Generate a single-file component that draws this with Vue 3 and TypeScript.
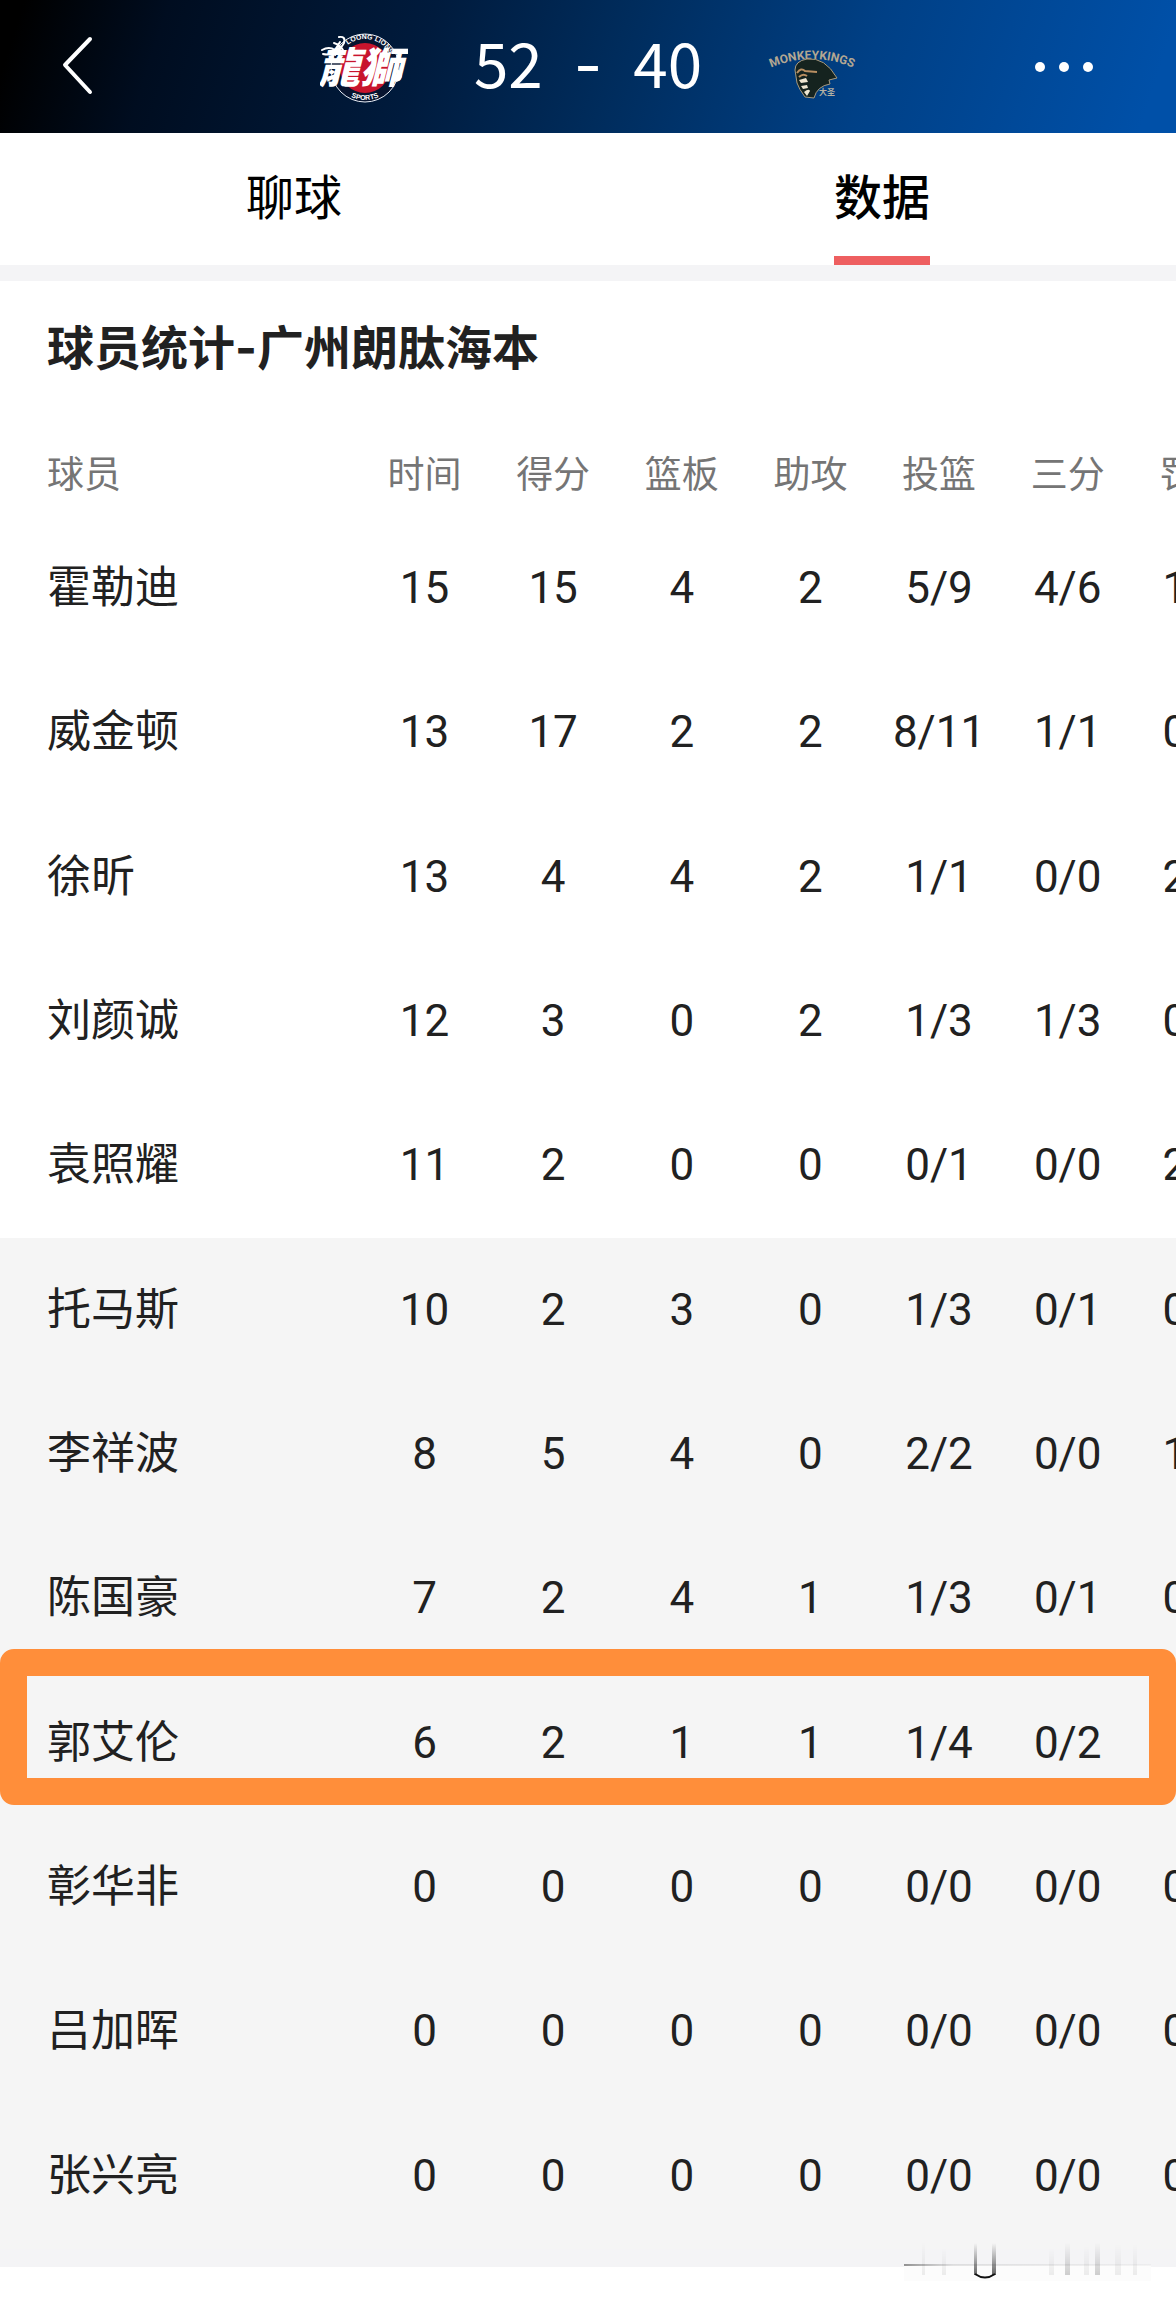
<script setup lang="ts">
interface Player {
  name: string
  stats: string[]
  bench?: boolean
  marked?: boolean
}

const columns: string[] = ['时间', '得分', '篮板', '助攻', '投篮', '三分', '罚球']

const players: Player[] = [
  { name: '霍勒迪', stats: ['15', '15', '4', '2', '5/9', '4/6', '1/2'] },
  { name: '威金顿', stats: ['13', '17', '2', '2', '8/11', '1/1', '0/0'] },
  { name: '徐昕', stats: ['13', '4', '4', '2', '1/1', '0/0', '2/2'] },
  { name: '刘颜诚', stats: ['12', '3', '0', '2', '1/3', '1/3', '0/0'] },
  { name: '袁照耀', stats: ['11', '2', '0', '0', '0/1', '0/0', '2/2'] },
  { name: '托马斯', stats: ['10', '2', '3', '0', '1/3', '0/1', '0/0'], bench: true },
  { name: '李祥波', stats: ['8', '5', '4', '0', '2/2', '0/0', '1/2'], bench: true },
  { name: '陈国豪', stats: ['7', '2', '4', '1', '1/3', '0/1', '0/0'], bench: true },
  { name: '郭艾伦', stats: ['6', '2', '1', '1', '1/4', '0/2', '0/0'], bench: true, marked: true },
  { name: '彰华非', stats: ['0', '0', '0', '0', '0/0', '0/0', '0/0'], bench: true },
  { name: '吕加晖', stats: ['0', '0', '0', '0', '0/0', '0/0', '0/0'], bench: true },
  { name: '张兴亮', stats: ['0', '0', '0', '0', '0/0', '0/0', '0/0'], bench: true },
]
</script>

<template>
  <div class="page">
    <header class="topbar">
      <button class="icon-btn back" type="button" aria-label="返回">
        <svg width="36" height="64" viewBox="0 0 36 64">
          <path d="M31 4 L6 30 L31 57" fill="none" stroke="#fff" stroke-width="4" stroke-linecap="round" stroke-linejoin="round" />
        </svg>
      </button>

      <div class="match">
        <svg class="logo" width="88" height="88" viewBox="0 0 88 88" role="img" aria-label="龙狮">
          <defs>
            <path id="ring-top" d="M17 44 A28 28 0 0 1 73 44" />
            <path id="ring-bottom" d="M12 44 A33 33 0 0 0 78 44" />
          </defs>
          <circle cx="45" cy="45" r="34" fill="#07142f" stroke="#e8edf5" stroke-width="1" />
          <circle cx="45" cy="45" r="25" fill="#c8142d" />
          <text class="ring-text"><textPath href="#ring-top" startOffset="57%" text-anchor="middle">LOONG LIONS</textPath></text>
          <text class="ring-text"><textPath href="#ring-bottom" startOffset="50%" text-anchor="middle">SPORTS</textPath></text>
          <path d="M2 27 Q9 23 15 27 L20 19 M3 31 Q12 33 18 27 M14 20 Q21 22 24 29 M19 14 Q26 13 24 20 Q21 25 15 32" fill="none" stroke="#fff" stroke-width="2" stroke-linecap="round" />
          <text class="lion-text" x="40" y="60" text-anchor="middle">龍獅</text>
          <path d="M77 46 Q85 50 80 57 Q75 61 71 56 Q77 55 77 46 Z" fill="#fff" />
        </svg>

        <div class="score">
          <span>52</span>
          <span class="dash">-</span>
          <span>40</span>
        </div>

        <svg class="logo" width="88" height="88" viewBox="0 0 88 88" role="img" aria-label="Monkey Kings">
          <defs>
            <path id="king-arc" d="M-4 48 Q44 24 92 48" />
          </defs>
          <text class="king-text"><textPath href="#king-arc" startOffset="50%" text-anchor="middle">MONKEYKINGS</textPath></text>
          <path d="M27 47 Q27 38 39 36 Q57 34 69 55 L61 57 L62 61 Q49 63 46 75 L37 74 Q31 66 29 60 Z" fill="#15231f" stroke="#a99b7e" stroke-width="1" stroke-linejoin="round" />
          <path d="M29 50 Q33 44 37 48 L49 49 M31 54 Q35 50 39 53" fill="none" stroke="#b98f62" stroke-width="2" />
          <path d="M31 57 L38 55 L40 59 L33 60 Z M33 63 L39 62 L40 65 L35 66 Z M36 69 Q41 65 42 68 L39 73 Z" fill="#eee6d2" />
          <text class="king-mark" x="59" y="72" text-anchor="middle">大圣</text>
        </svg>
      </div>

      <button class="icon-btn more" type="button" aria-label="更多">
        <svg width="60" height="12" viewBox="0 0 60 12">
          <circle cx="6" cy="6" r="5" fill="#fff" />
          <circle cx="30" cy="6" r="5" fill="#fff" />
          <circle cx="54" cy="6" r="5" fill="#fff" />
        </svg>
      </button>
    </header>

    <nav class="tabs">
      <a class="tab" href="#chat"><span>聊球</span></a>
      <a class="tab active" href="#stats" aria-current="page"><span>数据</span></a>
    </nav>

    <main class="panel">
      <h1 class="title">球员统计<span class="dash">-</span>广州朗肽海本</h1>
      <div class="scroller">
        <table class="stats">
          <thead>
            <tr>
              <th class="name" scope="col">球员</th>
              <th v-for="column in columns" :key="column" scope="col">{{ column }}</th>
            </tr>
          </thead>
          <tbody>
            <tr v-for="player in players" :key="player.name" :class="{ bench: player.bench }">
              <th class="name" scope="row">
                {{ player.name }}
                <i v-if="player.marked" class="marker" aria-hidden="true"></i>
              </th>
              <td v-for="(value, index) in player.stats" :key="index">{{ value }}</td>
            </tr>
          </tbody>
        </table>
      </div>
    </main>

    <footer class="footer">
      <svg class="smudge" width="248" height="40" viewBox="0 0 248 40" aria-hidden="true">
        <defs>
          <linearGradient id="fade-down" x1="0" y1="0" x2="0" y2="1">
            <stop offset="0" stop-color="#222" stop-opacity="0" />
            <stop offset="1" stop-color="#222" stop-opacity="0.7" />
          </linearGradient>
          <linearGradient id="fade-right" x1="0" y1="0" x2="1" y2="0">
            <stop offset="0" stop-color="#777" stop-opacity="0.8" />
            <stop offset="0.2" stop-color="#999" stop-opacity="0.25" />
            <stop offset="1" stop-color="#aaa" stop-opacity="0.1" />
          </linearGradient>
        </defs>
        <rect x="0" y="22" width="247" height="16" fill="#fcfcfc" />
        <rect x="0" y="21" width="247" height="2" fill="url(#fade-right)" />
        <g fill="url(#fade-down)">
          <rect x="70" y="0" width="3" height="32" />
          <rect x="88" y="0" width="4" height="32" />
          <g opacity="0.3">
            <rect x="161" y="0" width="5" height="32" />
            <rect x="191" y="0" width="5" height="32" />
          </g>
          <g opacity="0.1">
            <rect x="18" y="0" width="3" height="32" />
            <rect x="38" y="6" width="4" height="26" />
            <rect x="145" y="6" width="5" height="26" />
            <rect x="180" y="4" width="5" height="28" />
            <rect x="211" y="2" width="6" height="30" />
            <rect x="229" y="2" width="4" height="30" />
          </g>
        </g>
        <path d="M71 31 Q81 38 91 31" fill="none" stroke="#111" stroke-width="2" />
      </svg>
    </footer>
  </div>
</template>

<style>
body {
  margin: 0;
  background: #fff;
}
</style>

<style scoped>
.page {
  font-family: Roboto, "Noto Sans CJK SC", sans-serif;
  color: #212121;
  background: #fff;
  overflow: hidden;
}

.topbar {
  display: grid;
  grid-template-columns: 1fr auto 1fr;
  align-items: center;
  height: 133px;
  background: linear-gradient(108deg, #000 2%, #000d20 14%, #001b3d 36%, #002c5c 52%, #004086 73%, #0050a8 97%);
}

.icon-btn {
  display: flex;
  align-items: center;
  height: 88px;
  padding: 0;
  border: 0;
  background: none;
}

.back {
  justify-self: start;
  margin-left: 59px;
}

.more {
  justify-self: end;
  margin-right: 82px;
}

.match {
  display: flex;
  align-items: center;
}

.logo {
  display: block;
}

.score {
  display: flex;
  align-items: baseline;
  justify-content: center;
  gap: 31px;
  width: 360px;
  height: 92px;
  color: #fff;
  font-family: "Noto Sans CJK SC", sans-serif;
  font-size: 62px;
  line-height: 80px;
}

.ring-text {
  fill: #fff;
  font: 700 7px "Liberation Sans", sans-serif;
}

.lion-text {
  fill: #fff;
  font: italic 900 42px "Noto Sans CJK TC", sans-serif;
}

.king-text {
  fill: #b3a792;
  font: 700 12px Roboto, sans-serif;
}

.king-mark {
  fill: #b5b0a2;
  font: 700 8px "Noto Sans CJK SC", sans-serif;
}

.tabs {
  display: flex;
  height: 132px;
  border-bottom: 16px solid #f4f4f6;
}

.tab {
  display: flex;
  flex: 1;
  justify-content: center;
  color: #000;
  font-size: 48px;
  line-height: 132px;
  text-decoration: none;
}

.tab span {
  box-sizing: border-box;
  height: 132px;
}

.active {
  font-weight: 500;
}

.active span {
  border-bottom: 9px solid #ee5f60;
}

.title {
  margin: 0;
  padding: 32px 47px 0;
  font-size: 47px;
  font-weight: 700;
  line-height: 70px;
}

.dash {
  font-family: Inter, sans-serif;
}

.scroller {
  overflow: hidden;
}

.stats {
  width: 107.2%;
  table-layout: fixed;
  border-collapse: collapse;
}

.stats th,
.stats td {
  padding: 0 0 2px;
  font-weight: 400;
  text-align: center;
}

.stats .name {
  position: relative;
  width: 28.57%;
  box-sizing: border-box;
  padding-left: 47px;
  text-align: left;
}

thead tr {
  height: 133px;
}

.stats thead th {
  padding-top: 52px;
  color: #757575;
  font-size: 37px;
  line-height: 54px;
}

tbody tr {
  height: 144px;
}

tbody tr:nth-child(3n) {
  height: 145px;
}

tbody th,
tbody td {
  font-size: 44px;
  line-height: 64px;
}

.bench {
  background: #f5f5f5;
}

.marker {
  position: absolute;
  z-index: 1;
  top: -22px;
  left: 0;
  box-sizing: border-box;
  width: 100vw;
  height: 156px;
  border: 27px solid #ff8e3a;
  border-radius: 14px;
}

.footer {
  position: relative;
  height: 36px;
  border-top: 18px solid #f4f4f6;
}

.smudge {
  position: absolute;
  top: -24px;
  right: 24px;
}
</style>
